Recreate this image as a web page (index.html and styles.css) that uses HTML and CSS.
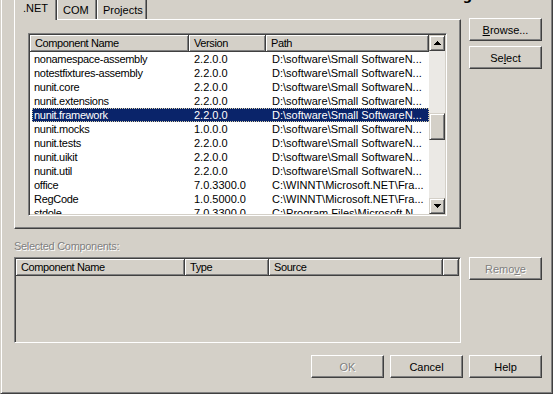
FILE: index.html
```html
<!DOCTYPE html>
<html lang="en">
<head>
    <meta charset="UTF-8">
    <meta name="viewport" content="width=device-width, initial-scale=1.0">
    <title>Add Reference</title>
    <link rel="stylesheet" href="styles.css">
</head>
<body>
    <div class="dialog">
        <span class="watermark">www.codeguru.com</span>

        <div class="top">
            <div class="tabctl">
                <div class="tabstrip">
                    <div class="tab active">.NET</div>
                    <div class="tab">COM</div>
                    <div class="tab wide">Projects</div>
                </div>
                <div class="tabpanel">
                    <div class="listview refs">
                        <div class="lv-main">
                            <div class="lv-head">
                                <div class="hcell c-name">Component Name</div>
                                <div class="hcell c-ver">Version</div>
                                <div class="hcell c-fill">Path</div>
                            </div>
                            <div class="lv-rows">
                                <div class="row"><span>nonamespace-assembly</span><span>2.2.0.0</span><span>D:\software\Small SoftwareN...</span></div>
                                <div class="row"><span>notestfixtures-assembly</span><span>2.2.0.0</span><span>D:\software\Small SoftwareN...</span></div>
                                <div class="row"><span>nunit.core</span><span>2.2.0.0</span><span>D:\software\Small SoftwareN...</span></div>
                                <div class="row"><span>nunit.extensions</span><span>2.2.0.0</span><span>D:\software\Small SoftwareN...</span></div>
                                <div class="row selected"><span>nunit.framework</span><span>2.2.0.0</span><span>D:\software\Small SoftwareN...</span></div>
                                <div class="row"><span>nunit.mocks</span><span>1.0.0.0</span><span>D:\software\Small SoftwareN...</span></div>
                                <div class="row"><span>nunit.tests</span><span>2.2.0.0</span><span>D:\software\Small SoftwareN...</span></div>
                                <div class="row"><span>nunit.uikit</span><span>2.2.0.0</span><span>D:\software\Small SoftwareN...</span></div>
                                <div class="row"><span>nunit.util</span><span>2.2.0.0</span><span>D:\software\Small SoftwareN...</span></div>
                                <div class="row"><span>office</span><span>7.0.3300.0</span><span>C:\WINNT\Microsoft.NET\Fra...</span></div>
                                <div class="row"><span>RegCode</span><span>1.0.5000.0</span><span>C:\WINNT\Microsoft.NET\Fra...</span></div>
                                <div class="row"><span>stdole</span><span>7.0.3300.0</span><span>C:\Program Files\Microsoft.N...</span></div>
                            </div>
                        </div>
                        <div class="vscroll">
                            <div class="sbtn">
                                <svg width="7" height="4" viewBox="0 0 7 4"><path d="M3 0h1v1h1v1h1v1h1v1H0V3h1V2h1V1h1z" fill="#000"/></svg>
                            </div>
                            <div class="track"><div class="thumb"></div></div>
                            <div class="sbtn">
                                <svg width="7" height="4" viewBox="0 0 7 4"><path d="M0 0h7v1H6v1H5v1H4v1H3V3H2V2H1V1H0z" fill="#000"/></svg>
                            </div>
                        </div>
                    </div>
                </div>
            </div>
            <div class="side">
                <button class="btn"><u>B</u>rowse...</button>
                <button class="btn">Se<u>l</u>ect</button>
            </div>
        </div>

        <div class="caption disabled">Selected Components:</div>

        <div class="middle">
            <div class="listview picked">
                <div class="lv-main">
                    <div class="lv-head">
                        <div class="hcell p-name">Component Name</div>
                        <div class="hcell p-type">Type</div>
                        <div class="hcell p-src">Source</div>
                        <div class="hcell c-fill"></div>
                    </div>
                </div>
            </div>
            <div class="side">
                <button class="btn disabled">Remo<u>v</u>e</button>
            </div>
        </div>

        <div class="footer">
            <button class="btn disabled">OK</button>
            <button class="btn">Cancel</button>
            <button class="btn">Help</button>
        </div>
    </div>
</body>
</html>
```

FILE: styles.css
```css
body {
  margin: 0;
  padding: 0;
  background-color: #d4d0c8;
  font-family: "Liberation Sans", Arial, sans-serif;
  font-size: 11px;
  color: #000;
}

.dialog {
  position: relative;
  width: 553px;
  height: 394px;
  box-sizing: border-box;
  border-left: 1px solid #d4d0c8;
  border-right: 1px solid #404040;
  border-bottom: 1px solid #404040;
  box-shadow: inset 1px 0 #fff, inset -1px -1px #808080;
  padding: 0 10px 0 13px;
  display: flex;
  flex-direction: column;
  overflow: hidden;
}

.watermark {
  position: absolute;
  top: -12px;
  right: 12px;
  font-family: "DejaVu Sans", sans-serif;
  font-weight: bold;
  font-size: 13px;
  letter-spacing: 1px;
  color: #000;
}

.top,
.middle {
  display: flex;
  gap: 8px;
}

.side {
  display: flex;
  flex-direction: column;
  gap: 5px;
}

.top .side {
  margin-top: 18px;
}

/* tabs */
.tabctl {
  width: 447px;
}

.tabstrip {
  display: flex;
  align-items: flex-end;
  height: 19px;
}

.tab {
  width: 40px;
  height: 19px;
  box-sizing: border-box;
  padding: 4px 0 0 5px;
  line-height: 13px;
  border-left: 1px solid #fff;
  border-right: 1px solid #404040;
  box-shadow: inset -1px 0 #808080;
}

.tab.wide {
  width: 50px;
}

.tab.active {
  position: relative;
  z-index: 1;
  width: 43px;
  height: 20px;
  margin-bottom: -1px;
  padding: 2px 0 0 8px;
  background-color: #d4d0c8;
}

.tabpanel {
  height: 210px;
  box-sizing: border-box;
  border: 1px solid;
  border-color: #fff #404040 #404040 #fff;
  box-shadow: inset -1px -1px #808080;
  padding: 13px;
}

/* list views */
.listview {
  display: flex;
  box-sizing: border-box;
  border: 1px solid;
  border-color: #808080 #fff #fff #808080;
  box-shadow: inset 1px 1px #404040, inset -1px -1px #d4d0c8;
  padding: 1px;
  overflow: hidden;
}

.listview.refs {
  width: 419px;
  height: 183px;
}

.listview.picked {
  width: 447px;
  height: 86px;
}

.lv-main {
  flex-grow: 1;
  display: flex;
  flex-direction: column;
  background-color: #fff;
  overflow: hidden;
}

.picked .lv-main {
  background-color: #d4d0c8;
}

.lv-head {
  display: flex;
  height: 17px;
  background-color: #d4d0c8;
}

.hcell {
  box-sizing: border-box;
  height: 17px;
  padding: 2px 0 0 5px;
  line-height: 13px;
  letter-spacing: -0.4px;
  border-right: 1px solid #404040;
  border-bottom: 1px solid #404040;
  box-shadow: inset 1px 1px #fff, inset -1px -1px #808080;
  white-space: nowrap;
  overflow: hidden;
}

.c-name { width: 159px; }
.c-ver { width: 77px; }
.c-fill { flex-grow: 1; }
.p-name { width: 169px; }
.p-type { width: 84px; }
.p-src { width: 174px; }

.lv-rows {
  flex-grow: 1;
  overflow: hidden;
}

.row {
  display: grid;
  grid-template-columns: 157px 77px 1fr;
  height: 14px;
  line-height: 14px;
  margin-left: 2px;
  white-space: nowrap;
}

.row span {
  overflow: hidden;
  padding-left: 5px;
}

.row span:first-child {
  padding-left: 2px;
  letter-spacing: -0.3px;
}

.row span:last-child {
  padding-left: 6px;
}

.row.selected {
  background-color: #0a246a;
  color: #fff;
  outline: 1px dotted #d8d0a8;
  outline-offset: -1px;
}

/* scroll bar */
.vscroll {
  width: 16px;
  display: flex;
  flex-direction: column;
}

.sbtn {
  width: 16px;
  height: 16px;
  box-sizing: border-box;
  background-color: #d4d0c8;
  border: 1px solid;
  border-color: #d4d0c8 #404040 #404040 #d4d0c8;
  box-shadow: inset 1px 1px #fff, inset -1px -1px #808080;
  display: flex;
  align-items: center;
  justify-content: center;
}

.track {
  flex-grow: 1;
  background-color: #ebe9e5;
}

.thumb {
  margin-top: 62px;
  height: 27px;
  box-sizing: border-box;
  background-color: #d4d0c8;
  border: 1px solid;
  border-color: #d4d0c8 #404040 #404040 #d4d0c8;
  box-shadow: inset 1px 1px #fff, inset -1px -1px #808080;
}

/* labels and buttons */
.caption {
  margin: 11px 0 4px 0;
  height: 13px;
  line-height: 13px;
  letter-spacing: -0.3px;
}

.disabled {
  color: #808080;
  text-shadow: 1px 1px #fff;
}

.btn {
  width: 73px;
  height: 23px;
  box-sizing: border-box;
  padding: 0;
  background-color: #d4d0c8;
  border: 1px solid;
  border-color: #fff #404040 #404040 #fff;
  box-shadow: inset -1px -1px #808080;
  font-family: inherit;
  font-size: 11px;
  color: #000;
}

.btn.disabled {
  color: #808080;
}

.footer {
  display: flex;
  justify-content: flex-end;
  gap: 6px;
  margin-top: 12px;
}
```
